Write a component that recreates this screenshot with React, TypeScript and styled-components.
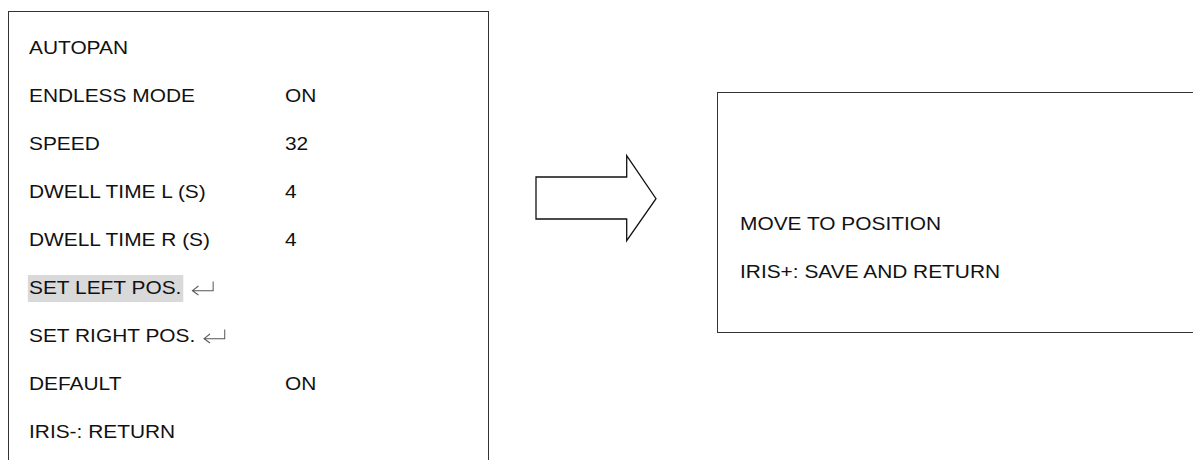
import React from 'react'
import styled, { createGlobalStyle } from 'styled-components'

const GlobalStyle = createGlobalStyle`
  html, body {
    margin: 0;
    padding: 0;
    background: #ffffff;
  }
  body {
    font-family: 'Liberation Sans', Arial, sans-serif;
    color: #111111;
  }
`

const Page = styled.div`
  width: 1193px;
  height: 460px;
  display: flex;
  align-items: flex-start;
  overflow: hidden;
  background: #ffffff;
`

const Screen = styled.div`
  flex: 0 0 auto;
  box-sizing: border-box;
  border: 1px solid #333333;
  background: #ffffff;
`

const MenuScreen = styled(Screen)`
  width: 481px;
  height: 470px;
  margin: 11px 0 0 8px;
  padding: 12px 0 0 20px;
  border-bottom: none;
`

const MessageScreen = styled(Screen)`
  width: 560px;
  height: 241px;
  margin: 92px 0 0 59px;
  padding: 107px 0 0 22px;
  border-right: none;
`

/* the OSD text is drawn wider than plain Arial, so stretch the whole block */
const OsdText = styled.div`
  font-size: 18px;
  transform: scaleX(1.16);
  transform-origin: left top;
  white-space: nowrap;
`

const Row = styled.div`
  display: grid;
  grid-template-columns: 220.7px auto;
  height: 48px;
  line-height: 48px;
`

const Label = styled.span<{ $selected?: boolean }>`
  display: inline-block;
  ${(p) =>
    p.$selected &&
    `
    background: #d9d9d9;
    line-height: 27px;
    height: 27px;
    padding: 0 2px 0 1px;
    margin-left: -1px;
  `}
`

const Value = styled.span``

const EnterMark = styled.svg`
  width: 19px;
  height: 16px;
  margin-left: 7px;
  vertical-align: -2px;
  overflow: visible;
`

const Enter = () => (
  <EnterMark viewBox="0 0 22 16" preserveAspectRatio="none">
    <path
      d="M7 6 L1 10.7 L7 15 M1 10.7 H21.7 V1.5"
      fill="none"
      stroke="#555555"
      strokeWidth="1"
    />
  </EnterMark>
)

const ArrowBox = styled.svg`
  flex: 0 0 auto;
  width: 124px;
  height: 90px;
  margin: 153px 0 0 45px;
`

const Arrow = () => (
  <ArrowBox viewBox="0 0 124 90">
    <polygon
      points="2,24 92.7,24 92.7,2.7 122,45.7 92.7,87.7 92.7,66 2,66"
      fill="#ffffff"
      stroke="#111111"
      strokeWidth="1.3"
      strokeLinejoin="miter"
    />
  </ArrowBox>
)

type Item = { label: string; value?: string; enter?: boolean; selected?: boolean }

const items: Item[] = [
  { label: 'AUTOPAN' },
  { label: 'ENDLESS MODE', value: 'ON' },
  { label: 'SPEED', value: '32' },
  { label: 'DWELL TIME L (S)', value: '4' },
  { label: 'DWELL TIME R (S)', value: '4' },
  { label: 'SET LEFT POS.', enter: true, selected: true },
  { label: 'SET RIGHT POS.', enter: true },
  { label: 'DEFAULT', value: 'ON' },
  { label: 'IRIS-: RETURN' },
]

export default function App() {
  return (
    <>
      <GlobalStyle />
      <Page>
        <MenuScreen>
          <OsdText>
            {items.map((it) => (
              <Row key={it.label}>
                <span>
                  <Label $selected={it.selected}>{it.label}</Label>
                  {it.enter && <Enter />}
                </span>
                <Value>{it.value}</Value>
              </Row>
            ))}
          </OsdText>
        </MenuScreen>
        <Arrow />
        <MessageScreen>
          <OsdText>
            <Row>MOVE TO POSITION</Row>
            <Row>IRIS+: SAVE AND RETURN</Row>
          </OsdText>
        </MessageScreen>
      </Page>
    </>
  )
}
